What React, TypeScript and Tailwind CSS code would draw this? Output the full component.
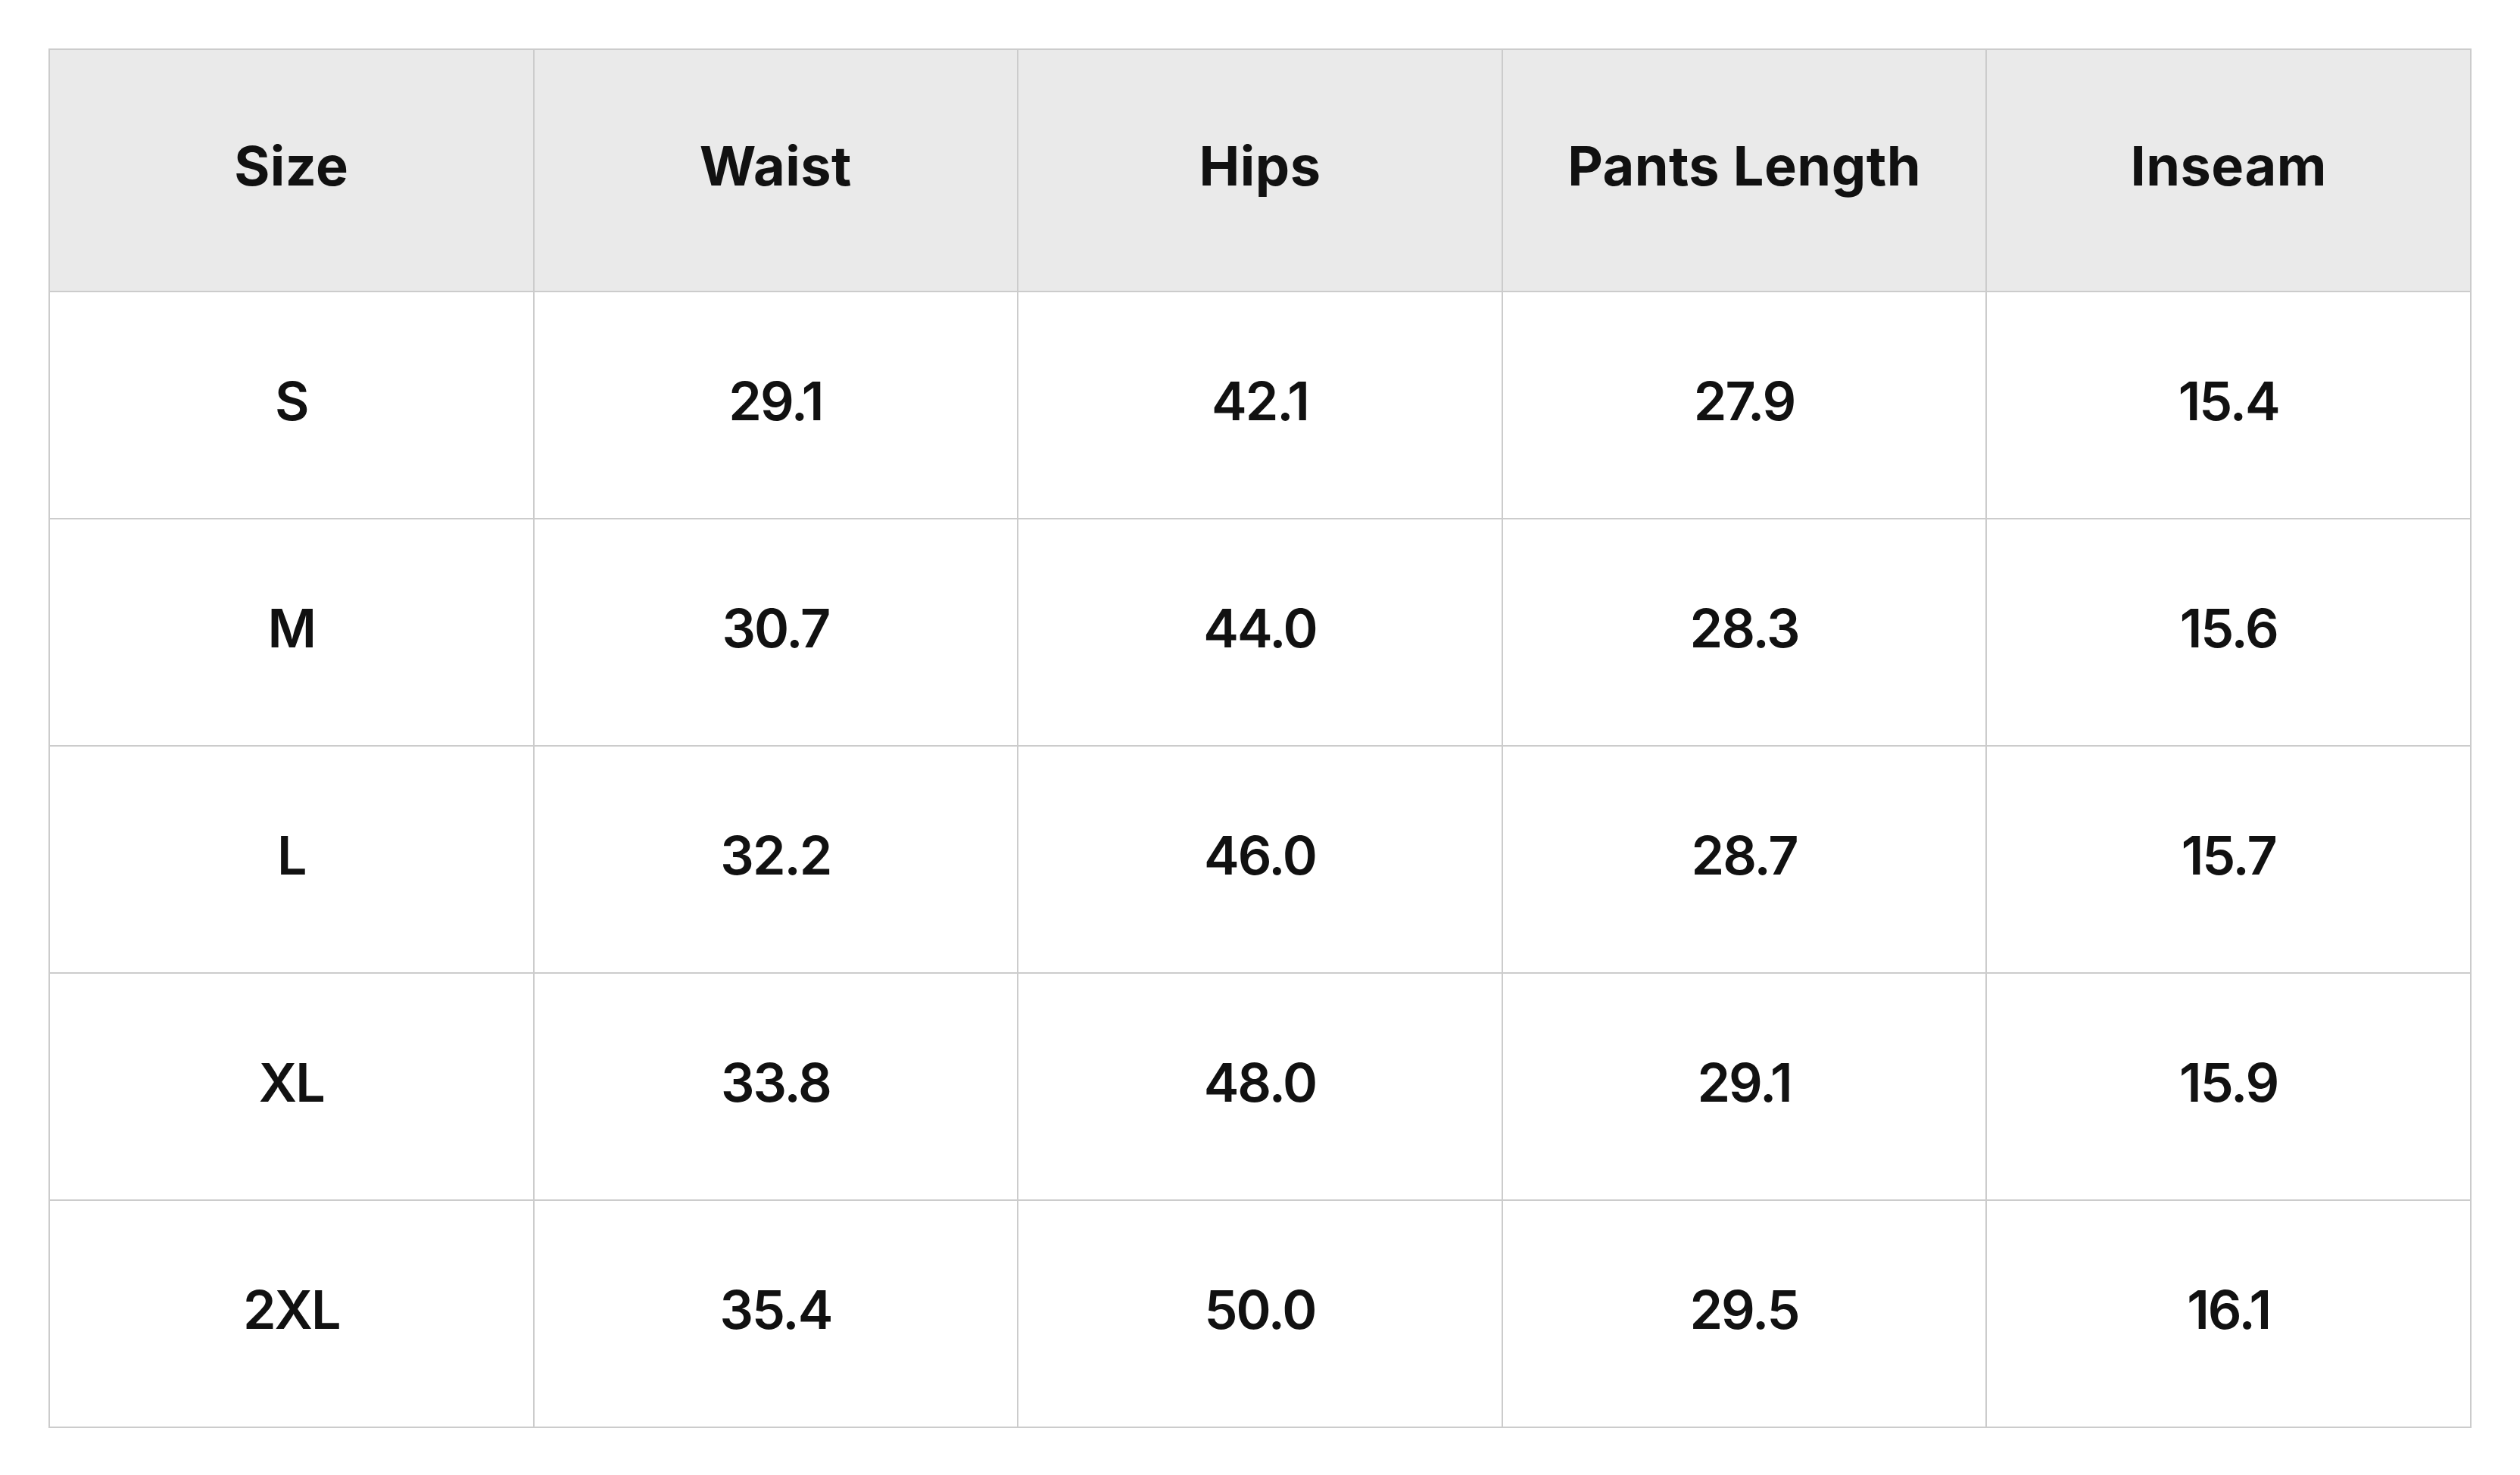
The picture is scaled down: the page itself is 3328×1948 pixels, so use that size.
import React from "react";

const headers = ["Size", "Waist", "Hips", "Pants Length", "Inseam"];
const rows = [
  ["S", "29.1", "42.1", "27.9", "15.4"],
  ["M", "30.7", "44.0", "28.3", "15.6"],
  ["L", "32.2", "46.0", "28.7", "15.7"],
  ["XL", "33.8", "48.0", "29.1", "15.9"],
  ["2XL", "35.4", "50.0", "29.5", "16.1"],
];

export default function App() {
  return (
    <div className="min-h-screen bg-white p-[64px] font-['Inter',sans-serif] text-[#111111]">
      <table className="w-full table-fixed border-collapse">
        <thead>
          <tr className="h-[320px] bg-[#eaeaea]">
            {headers.map((h) => (
              <th
                key={h}
                className="border-2 border-[#cccccc] text-center align-middle text-[72px] font-bold leading-none tracking-[0.5px] pb-[12px]"
              >
                {h}
              </th>
            ))}
          </tr>
        </thead>
        <tbody>
          {rows.map((r) => (
            <tr key={r[0]} className="h-[300px] bg-white">
              {r.map((c, i) => (
                <td
                  key={i}
                  className="border-2 border-[#cccccc] text-center align-middle text-[70px] font-semibold leading-none tracking-[-2px] pb-[10px]"
                >
                  {c}
                </td>
              ))}
            </tr>
          ))}
        </tbody>
      </table>
    </div>
  );
}
